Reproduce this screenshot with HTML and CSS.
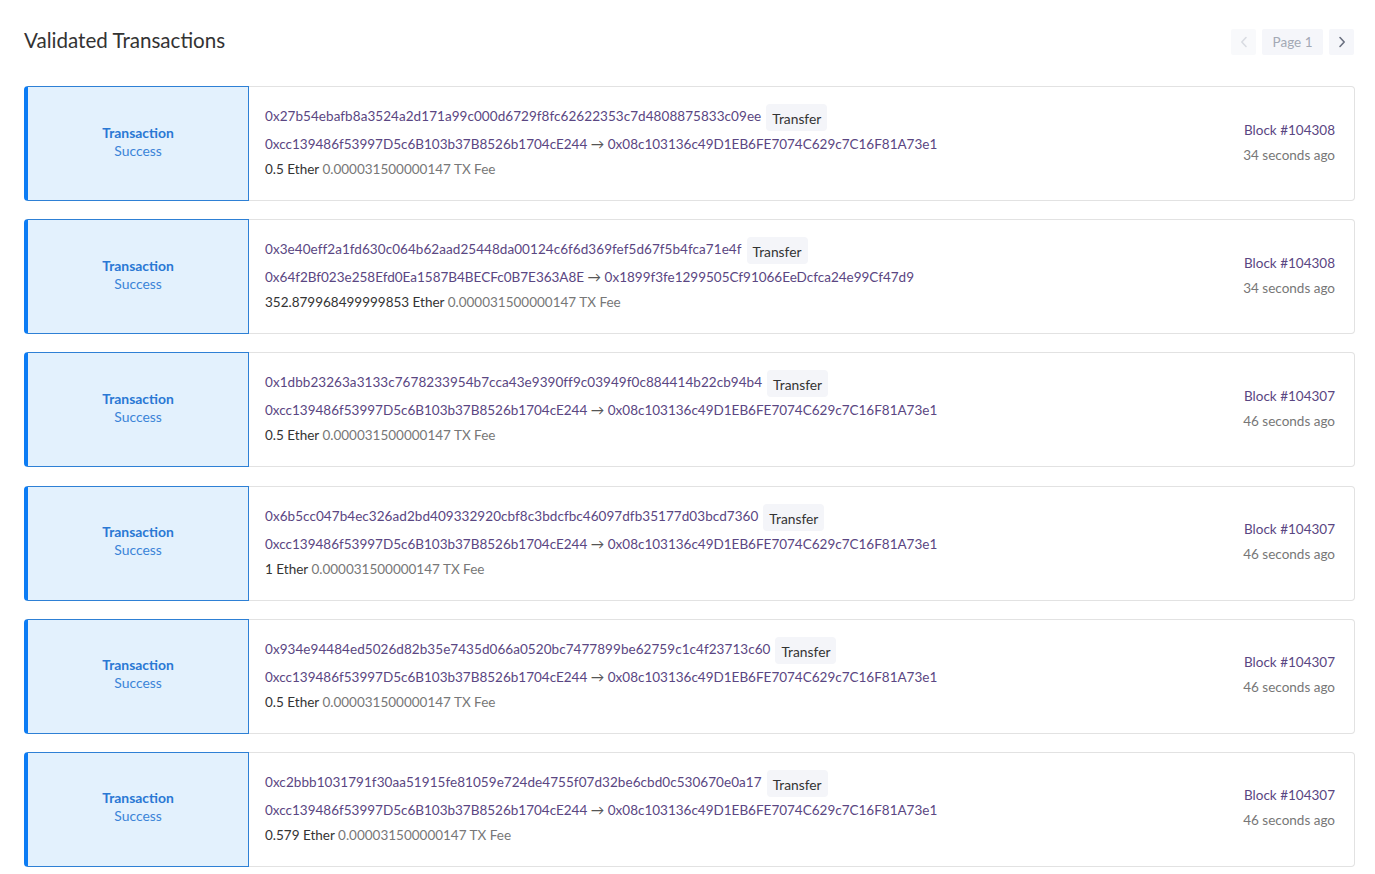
FILE: index.html
```html
<!DOCTYPE html>
<html>
<head>
<meta charset="utf-8">
<link rel="stylesheet" href="styles.css">
</head>
<body>
<div class="page">
  <div class="header">
    <h1 class="title">Validated Transactions</h1>
    <div class="pager">
      <span class="pbtn arrow disabled"><svg width="8" height="12" viewBox="0 0 8 12"><path d="M6 1.5L1.8 6L6 10.5" fill="none" stroke="currentColor" stroke-width="1.6" stroke-linecap="round" stroke-linejoin="round"/></svg></span>
      <span class="pbtn label">Page 1</span>
      <span class="pbtn arrow"><svg width="8" height="12" viewBox="0 0 8 12"><path d="M2 1.5L6.2 6L2 10.5" fill="none" stroke="currentColor" stroke-width="1.6" stroke-linecap="round" stroke-linejoin="round"/></svg></span>
    </div>
  </div>

  <div class="card">
    <div class="tile"><div class="tile-title">Transaction</div><div class="tile-status">Success</div></div>
    <div class="body">
      <div class="info">
        <div class="line1"><span class="hash">0x27b54ebafb8a3524a2d171a99c000d6729f8fc62622353c7d4808875833c09ee</span><span class="badge">Transfer</span></div>
        <div class="line2"><span class="hash">0xcc139486f53997D5c6B103b37B8526b1704cE244</span> <span class="arrow-r">&rarr;</span> <span class="hash">0x08c103136c49D1EB6FE7074C629c7C16F81A73e1</span></div>
        <div class="line3"><span class="amount">0.5 Ether</span> <span class="fee">0.000031500000147 TX Fee</span></div>
      </div>
      <div class="meta"><div class="block">Block #104308</div><div class="age">34 seconds ago</div></div>
    </div>
  </div>

  <div class="card">
    <div class="tile"><div class="tile-title">Transaction</div><div class="tile-status">Success</div></div>
    <div class="body">
      <div class="info">
        <div class="line1"><span class="hash">0x3e40eff2a1fd630c064b62aad25448da00124c6f6d369fef5d67f5b4fca71e4f</span><span class="badge">Transfer</span></div>
        <div class="line2"><span class="hash">0x64f2Bf023e258Efd0Ea1587B4BECFc0B7E363A8E</span> <span class="arrow-r">&rarr;</span> <span class="hash">0x1899f3fe1299505Cf91066EeDcfca24e99Cf47d9</span></div>
        <div class="line3"><span class="amount">352.879968499999853 Ether</span> <span class="fee">0.000031500000147 TX Fee</span></div>
      </div>
      <div class="meta"><div class="block">Block #104308</div><div class="age">34 seconds ago</div></div>
    </div>
  </div>

  <div class="card">
    <div class="tile"><div class="tile-title">Transaction</div><div class="tile-status">Success</div></div>
    <div class="body">
      <div class="info">
        <div class="line1"><span class="hash">0x1dbb23263a3133c7678233954b7cca43e9390ff9c03949f0c884414b22cb94b4</span><span class="badge">Transfer</span></div>
        <div class="line2"><span class="hash">0xcc139486f53997D5c6B103b37B8526b1704cE244</span> <span class="arrow-r">&rarr;</span> <span class="hash">0x08c103136c49D1EB6FE7074C629c7C16F81A73e1</span></div>
        <div class="line3"><span class="amount">0.5 Ether</span> <span class="fee">0.000031500000147 TX Fee</span></div>
      </div>
      <div class="meta"><div class="block">Block #104307</div><div class="age">46 seconds ago</div></div>
    </div>
  </div>

  <div class="card">
    <div class="tile"><div class="tile-title">Transaction</div><div class="tile-status">Success</div></div>
    <div class="body">
      <div class="info">
        <div class="line1"><span class="hash">0x6b5cc047b4ec326ad2bd409332920cbf8c3bdcfbc46097dfb35177d03bcd7360</span><span class="badge">Transfer</span></div>
        <div class="line2"><span class="hash">0xcc139486f53997D5c6B103b37B8526b1704cE244</span> <span class="arrow-r">&rarr;</span> <span class="hash">0x08c103136c49D1EB6FE7074C629c7C16F81A73e1</span></div>
        <div class="line3"><span class="amount">1 Ether</span> <span class="fee">0.000031500000147 TX Fee</span></div>
      </div>
      <div class="meta"><div class="block">Block #104307</div><div class="age">46 seconds ago</div></div>
    </div>
  </div>

  <div class="card">
    <div class="tile"><div class="tile-title">Transaction</div><div class="tile-status">Success</div></div>
    <div class="body">
      <div class="info">
        <div class="line1"><span class="hash">0x934e94484ed5026d82b35e7435d066a0520bc7477899be62759c1c4f23713c60</span><span class="badge">Transfer</span></div>
        <div class="line2"><span class="hash">0xcc139486f53997D5c6B103b37B8526b1704cE244</span> <span class="arrow-r">&rarr;</span> <span class="hash">0x08c103136c49D1EB6FE7074C629c7C16F81A73e1</span></div>
        <div class="line3"><span class="amount">0.5 Ether</span> <span class="fee">0.000031500000147 TX Fee</span></div>
      </div>
      <div class="meta"><div class="block">Block #104307</div><div class="age">46 seconds ago</div></div>
    </div>
  </div>

  <div class="card">
    <div class="tile"><div class="tile-title">Transaction</div><div class="tile-status">Success</div></div>
    <div class="body">
      <div class="info">
        <div class="line1"><span class="hash">0xc2bbb1031791f30aa51915fe81059e724de4755f07d32be6cbd0c530670e0a17</span><span class="badge">Transfer</span></div>
        <div class="line2"><span class="hash">0xcc139486f53997D5c6B103b37B8526b1704cE244</span> <span class="arrow-r">&rarr;</span> <span class="hash">0x08c103136c49D1EB6FE7074C629c7C16F81A73e1</span></div>
        <div class="line3"><span class="amount">0.579 Ether</span> <span class="fee">0.000031500000147 TX Fee</span></div>
      </div>
      <div class="meta"><div class="block">Block #104307</div><div class="age">46 seconds ago</div></div>
    </div>
  </div>
</div>
</body>
</html>
```

FILE: styles.css
```css
html, body {
  margin: 0;
  padding: 0;
  background: #ffffff;
}
body {
  font-family: "Lato", "Open Sans", sans-serif;
  color: #333333;
}
.page {
  padding: 29px 20px 0 24px;
}
.header {
  display: flex;
  justify-content: space-between;
  align-items: center;
  height: 26px;
  margin-bottom: 31px;
}
.title {
  margin: -5px 0 0 0;
  font-size: 20.6px;
  font-weight: 400;
  color: #333333;
  line-height: 26px;
}
.pager {
  display: flex;
  gap: 6px;
  margin-right: 1px;
}
.pbtn {
  display: flex;
  align-items: center;
  justify-content: center;
  height: 26px;
  background: #f5f6fa;
  border-radius: 2px;
  font-size: 13.5px;
  color: #a3a9b5;
}
.pbtn.arrow {
  width: 25px;
  color: #6a7080;
}
.pbtn.arrow.disabled {
  color: #d9dce2;
  background: #f8f9fb;
}
.pbtn.label {
  width: 61px;
}
.card {
  display: flex;
  height: 115px;
  margin-bottom: 18.2px;
}
.tile {
  width: 225px;
  flex: none;
  box-sizing: border-box;
  background: #e3f1fd;
  border: 1px solid #2e80d5;
  border-left: 4px solid #0c7cf4;
  border-radius: 4px 0 0 4px;
  display: flex;
  flex-direction: column;
  justify-content: center;
  align-items: center;
  font-size: 13.9px;
  line-height: 18px;
  padding-bottom: 4px;
}
.tile-title {
  font-weight: 700;
  color: #2a78d4;
}
.tile-status {
  color: #3b84d8;
}
.body {
  flex: 1;
  display: flex;
  justify-content: space-between;
  align-items: center;
  border: 1px solid #e2e2e2;
  border-left: none;
  border-radius: 0 4px 4px 0;
  padding: 0 19px 0 16px;
  font-size: 13.5px;
}
.info {
  display: flex;
  flex-direction: column;
  margin-top: -2px;
}
.line1 {
  display: flex;
  align-items: center;
  height: 27px;
}
.line1 .hash {
  letter-spacing: 0.06px;
  margin-top: -3px;
}
.line2 {
  height: 26px;
  line-height: 26px;
}
.line3 {
  height: 24px;
  line-height: 24px;
}
.hash {
  color: #5a4682;
}
.arrow-r {
  color: #555555;
}
.badge {
  margin-left: 5px;
  background: #f4f5f9;
  border-radius: 4px;
  padding: 0 6px;
  height: 27px;
  line-height: 29px;
  color: #333333;
  font-size: 13.8px;
}
.amount {
  color: #333333;
}
.fee {
  color: #777777;
}
.meta {
  text-align: right;
  line-height: 25px;
  margin-top: -2px;
}
.block {
  color: #5a4682;
}
.age {
  color: #777777;
}
```
